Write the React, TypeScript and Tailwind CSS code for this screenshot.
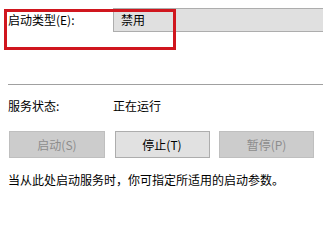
const font = { fontFamily: '"Noto Sans CJK SC", "Microsoft YaHei", sans-serif' };

function WinButton({ label, disabled }: { label: string; disabled?: boolean }) {
  return (
    <div
      className={
        "h-[27px] flex items-center justify-center border text-[12px] leading-none " +
        (disabled ? "bg-[#cccccc] border-[#bfbfbf] text-[#8d8d8d]" : "bg-[#e1e1e1] border-[#adadad] text-black")
      }
    >
      {label}
    </div>
  );
}

export default function App() {
  return (
    <div className="relative w-[323px] h-[204px] bg-white overflow-hidden text-[12px] text-black" style={font}>
      {/* startup type */}
      <div className="flex items-center mt-[8px] h-[24px]">
        <span className="w-[113px] pl-[8px] leading-none">启动类型(E):</span>
        <div className="flex-1 h-[24px] flex items-center pl-[7px] bg-[#e0e0e0] border border-r-0 border-[#adadad] leading-none">
          禁用
        </div>
      </div>

      <div className="ml-[8px] mt-[52px] h-px bg-[#a0a0a0]" />

      {/* status */}
      <div className="flex items-center mt-[15px] h-[12px] leading-none">
        <span className="w-[113px] pl-[8px]">服务状态:</span>
        <span>正在运行</span>
      </div>

      <div className="grid grid-cols-[96px_95px_95px] gap-x-[9.5px] pl-[9px] mt-[19px]">
        <WinButton label="启动(S)" disabled />
        <WinButton label="停止(T)" />
        <WinButton label="暂停(P)" disabled />
      </div>

      <p className="pl-[8px] mt-[16px] leading-none">当从此处启动服务时，你可指定所适用的启动参数。</p>

      {/* annotation box */}
      <div className="absolute left-[4px] top-[9px] w-[172px] h-[41px] border-[3px] border-[#d0161e]" />
    </div>
  );
}
